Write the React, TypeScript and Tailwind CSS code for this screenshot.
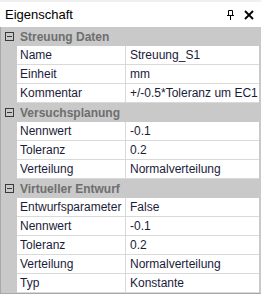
type Row = { name: string; value: string };
type Group = { title: string; rows: Row[] };

const groups: Group[] = [
  {
    title: "Streuung Daten",
    rows: [
      { name: "Name", value: "Streuung_S1" },
      { name: "Einheit", value: "mm" },
      { name: "Kommentar", value: "+/-0.5*Toleranz um EC1" },
    ],
  },
  {
    title: "Versuchsplanung",
    rows: [
      { name: "Nennwert", value: "-0.1" },
      { name: "Toleranz", value: "0.2" },
      { name: "Verteilung", value: "Normalverteilung" },
    ],
  },
  {
    title: "Virtueller Entwurf",
    rows: [
      { name: "Entwurfsparameter", value: "False" },
      { name: "Nennwert", value: "-0.1" },
      { name: "Toleranz", value: "0.2" },
      { name: "Verteilung", value: "Normalverteilung" },
      { name: "Typ", value: "Konstante" },
    ],
  },
];

function Minus() {
  return (
    <span className="w-[9px] h-[9px] border border-[#3a3a3a] flex items-center justify-center">
      <span className="w-[5px] h-px bg-[#3a3a3a]" />
    </span>
  );
}

export default function App() {
  return (
    <div className="w-[261px] h-[294px] bg-white flex flex-col overflow-hidden text-[12px] leading-none font-['Liberation_Sans',Arial,sans-serif]">
      <div className="h-[27px] flex items-center justify-between pl-[5px] pr-[7px] border-t-2 border-[#f0f0f0] text-black">
        <span className="text-[13px]">Eigenschaft</span>
        <div className="flex items-center gap-[10px]">
          <svg width="7" height="10" viewBox="0 0 7 10">
            <path d="M1.5 0.5h4v5h-4z M0 5.5h7 M3.5 5.5v4.5" stroke="#000" fill="none" strokeWidth="1" />
          </svg>
          <svg width="10" height="10" viewBox="0 0 10 10">
            <path d="M1 1L9 9M9 1L1 9" stroke="#000" strokeWidth="1.8" />
          </svg>
        </div>
      </div>
      <div className="flex-1 bg-[#c9c9c9] border-l border-b border-[#a8a8a8] pr-[2px]">
        {groups.map((g) => (
          <div key={g.title}>
            <div className="h-[19px] flex items-center">
              <div className="w-[16px] flex justify-center pl-[1px]">
                <Minus />
              </div>
              <span className="pl-[3px] font-bold text-[#6e6e6e]">{g.title}</span>
            </div>
            {g.rows.map((r, i) => (
              <div key={g.title + i} className="h-[19px] flex">
                <div className="w-[16px] shrink-0" />
                <div className="w-[109px] shrink-0 bg-white border-b border-r border-[#d9d9d9] pl-[3px] flex items-center text-[#1b1b3a]">
                  {r.name}
                </div>
                <div className="flex-1 bg-white border-b border-[#d9d9d9] pl-[4px] flex items-center text-[#1b1b3a] whitespace-nowrap overflow-hidden">
                  {r.value}
                </div>
              </div>
            ))}
          </div>
        ))}
      </div>
    </div>
  );
}
